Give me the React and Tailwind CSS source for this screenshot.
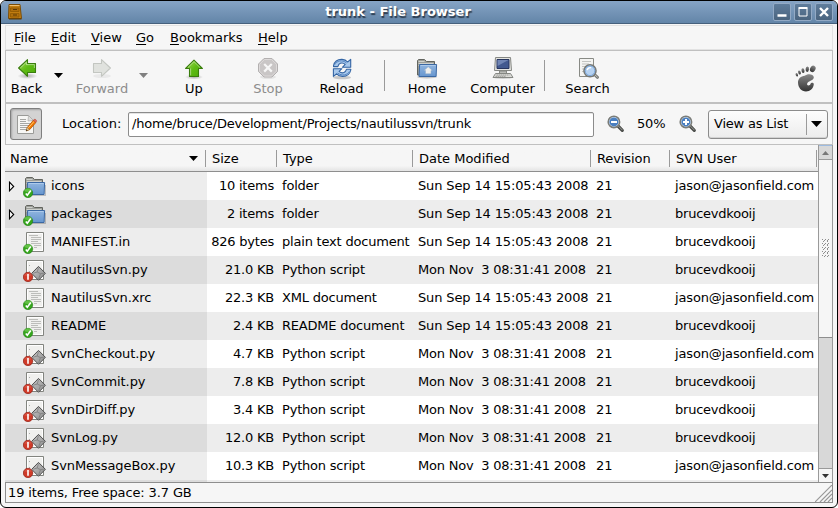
import React from "react";

const BackArrow = () => (
  <svg width="24" height="24" viewBox="0 0 24 24">
    <defs>
      <linearGradient id="green" x1="0" y1="0" x2="1" y2="1">
        <stop offset="0" stopColor="#a6e05a" />
        <stop offset="0.5" stopColor="#5fbb14" />
        <stop offset="1" stopColor="#4caa08" />
      </linearGradient>
      <radialGradient id="arrowShadow">
        <stop offset="0" stopColor="#000" stopOpacity="0.3" />
        <stop offset="1" stopColor="#000" stopOpacity="0" />
      </radialGradient>
    </defs>
    <ellipse cx="12.5" cy="20" rx="10" ry="3" fill="url(#arrowShadow)" />
    <path d="M3.6 12 L12.5 3.7 V7.5 H20.5 V16.5 H12.5 V20.3 Z" fill="url(#green)" stroke="#3a7d0e" strokeWidth="1.1" strokeLinejoin="round" />
    <path d="M5.3 12 L11.4 6.2 V8.6 H19.4 V12" fill="none" stroke="#fff" strokeOpacity="0.45" />
  </svg>
);

const ForwardArrow = () => (
  <svg width="24" height="24" viewBox="0 0 24 24">
    <ellipse cx="12" cy="20" rx="9" ry="2" fill="#000" opacity="0.05" />
    <path d="M20.4 12 L11.5 3.7 V7.5 H3.5 V16.5 H11.5 V20.3 Z" fill="#e0e2de" stroke="#c3c6c1" strokeWidth="1.1" strokeLinejoin="round" />
  </svg>
);

const UpArrow = () => (
  <svg width="24" height="24" viewBox="0 0 24 24">
    <ellipse cx="12" cy="21" rx="9" ry="2.6" fill="url(#arrowShadow)" />
    <path d="M12 4.2 L20.4 12.5 H16.5 V20.5 H7.5 V12.5 H3.6 Z" fill="url(#green)" stroke="#3a7d0e" strokeWidth="1.1" strokeLinejoin="round" />
    <path d="M5.9 11.5 L12 5.6 L18 11.5 M8.6 12.5 V19.4" fill="none" stroke="#fff" strokeOpacity="0.45" />
  </svg>
);

const StopIcon = () => (
  <svg width="24" height="24" viewBox="0 0 24 24">
    <ellipse cx="12" cy="21" rx="8" ry="2" fill="#000" opacity="0.07" />
    <path d="M8 2.5 H16 L21.5 8 V15.5 L16 21 H8 L2.5 15.5 V8 Z" fill="#c9c6c6" stroke="#b3b0b0" />
    <path d="M8.4 3.5 H15.6 L20.5 8.4 V15.1 L15.6 20 H8.4 L3.5 15.1 V8.4 Z" fill="none" stroke="#dddada" />
    <path d="M8.2 8 L15.8 15.6 M15.8 8 L8.2 15.6" stroke="#f6f6f6" strokeWidth="2.2" />
  </svg>
);

const ReloadIcon = () => (
  <svg width="24" height="24" viewBox="0 0 24 24">
    <ellipse cx="12" cy="21.5" rx="9" ry="1.7" fill="#000" opacity="0.18" />
    <path d="M3.5 9.8 C4.6 5 8.5 3.3 12 3.4 C14.8 3.5 16.6 4.8 17.6 6 L20.7 3.4 V11.3 H12.4 L15.2 8.4 C13.6 6.9 11.8 6.7 10.3 7.3 C8.6 8 8.3 9 7.8 10.6 H3.5 Z" fill="#a9c9ec" stroke="#3465a4" strokeWidth="1.1" strokeLinejoin="round" />
    <path d="M20.8 14 C19.7 18.8 15.8 20.5 12.3 20.4 C9.5 20.3 7.7 19 6.7 17.8 L3.4 20.4 V12.7 H11.9 L9.1 15.4 C10.7 16.9 12.5 17.1 14 16.5 C15.7 15.8 16 14.8 16.5 13.3 H20.8 Z" fill="#a9c9ec" stroke="#3465a4" strokeWidth="1.1" strokeLinejoin="round" />
    <path d="M5 8.5 C6.5 5 12 3.2 16.6 7" stroke="#5686c4" strokeWidth="1" fill="none" />
    <path d="M19.2 15.6 C17.5 19 12 20.4 7.6 17" stroke="#5686c4" strokeWidth="1" fill="none" />
  </svg>
);

const FolderShape = () => (
  <>
    <path d="M2.5 19 V4.5 L3.5 3.5 H9.5 L11.5 5.5 H19.5 V19 Z" fill="#9c9e99" stroke="#63655f" />
    <path d="M3.5 5.5 H9.5 M3.5 7.5 H18.5 M3.5 9.5 H5" stroke="#cfd1cc" />
    <path d="M4.6 8.5 H21.6 L21.1 20.5 H4 Z" fill="url(#folder)" stroke="#3b68a3" strokeLinejoin="round" />
    <path d="M5.6 9.5 H20.6" stroke="#b5cfee" strokeOpacity="0.8" />
  </>
);

const Gradients = () => (
  <svg className="absolute" width="0" height="0">
    <defs>
      <linearGradient id="folder" x1="0" y1="0" x2="0" y2="1">
        <stop offset="0" stopColor="#90b5df" />
        <stop offset="1" stopColor="#6796cf" />
      </linearGradient>
      <linearGradient id="foot" x1="0" y1="0" x2="0" y2="1">
        <stop offset="0" stopColor="#888" />
        <stop offset="1" stopColor="#333" />
      </linearGradient>
      <linearGradient id="gem" x1="0" y1="0" x2="1" y2="1">
        <stop offset="0" stopColor="#c8c8c8" />
        <stop offset="1" stopColor="#8a8a8a" />
      </linearGradient>
    </defs>
  </svg>
);

const HomeIcon = () => (
  <svg width="24" height="24" viewBox="0 0 24 24">
    <ellipse cx="12" cy="21" rx="10" ry="1.5" fill="#000" opacity="0.2" />
    <FolderShape />
    <path d="M13.2 10.8 L17.5 14.5 H16 V17.8 H10.5 V14.5 H9 Z" fill="#eeeeec" stroke="#8fa9c6" strokeWidth="0.5" />
  </svg>
);

const ComputerIcon = () => (
  <svg width="24" height="24" viewBox="0 0 24 24">
    <ellipse cx="12" cy="21.5" rx="10" ry="1.5" fill="#000" opacity="0.15" />
    <path d="M4.5 1.5 H19.5 L20.5 14.5 H3.5 Z" fill="#e4e4e0" stroke="#858783" />
    <path d="M6 3.5 H18 V12.5 H6 Z" fill="#42598f" stroke="#27355e" />
    <path d="M6.5 4 H17.5 L6.5 10 Z" fill="#7c90bd" opacity="0.8" />
    <path d="M8.5 15 H15.5 V17.5 H8.5 Z" fill="#b9bab6" stroke="#858783" />
    <path d="M4.5 17.5 H19.5 L22 21.5 H2 Z" fill="#dcdcd8" stroke="#858783" strokeLinejoin="round" />
    <path d="M5.5 19 H18.5 M4.5 20.3 H15" stroke="#9b9c98" strokeDasharray="1.5 0.5" />
  </svg>
);

const SearchIcon = () => (
  <svg width="24" height="24" viewBox="0 0 24 24">
    <path d="M3.5 2.5 H17.5 V20.5 H3.5 Z" fill="#f4f4f2" stroke="#888a85" />
    <path d="M6 5.5 H15 M6 8 H13 M6 10.5 H9 M6 13 H8 M6 15.5 H8" stroke="#c3c4c1" />
    <path d="M18.5 18.5 L21.5 21.3" stroke="#777975" strokeWidth="3" strokeLinecap="round" />
    <path d="M18.7 18.6 L21.3 21" stroke="#c8c9c5" strokeWidth="1" strokeLinecap="round" />
    <circle cx="14" cy="14.8" r="6" fill="#b6d2f1" stroke="#777975" strokeWidth="1.6" />
    <circle cx="14" cy="14.8" r="4.8" fill="none" stroke="#7ba6d8" strokeWidth="1" />
    <path d="M11.2 14.2 A3 3 0 0 1 15 11.8" stroke="#fff" strokeWidth="1.4" fill="none" />
  </svg>
);

const Foot = () => (
  <svg width="22" height="28" viewBox="0 0 22 28">
    <g fill="url(#foot)">
      <path d="M9.6 10.8 C12.5 8.2 18.6 8.8 18.8 12.3 C19 15.5 13.2 15.8 12.2 18.5 C11.4 21 15 21 15.6 18.8 C16 17.3 19 17.4 18.8 19.3 C18.4 23.5 15 26.5 11 26.5 C6.3 26.5 3.2 22.6 3 17.8 C2.9 13.6 6 11.3 9.6 10.8 Z" />
      <ellipse cx="17.8" cy="3.9" rx="2.6" ry="3.4" transform="rotate(30 17.8 3.9)" />
      <ellipse cx="12.3" cy="4.2" rx="1.7" ry="2.7" transform="rotate(5 12.3 4.2)" />
      <ellipse cx="8" cy="5.7" rx="1.5" ry="2.4" transform="rotate(-10 8 5.7)" />
      <ellipse cx="4.5" cy="7.5" rx="1.3" ry="2.1" transform="rotate(-20 4.5 7.5)" />
      <ellipse cx="1.8" cy="9.8" rx="1.1" ry="1.8" transform="rotate(-25 1.8 9.8)" />
    </g>
  </svg>
);

const EditIcon = () => (
  <svg width="24" height="24" viewBox="0 0 24 24">
    <path d="M3.5 3.5 H14.5 L19.5 8.5 V21.5 H3.5 Z" fill="#f6f6f4" stroke="#9a9b98" />
    <path d="M14.5 3.5 L14 9 L19.5 8.5 Z" fill="#dcdcda" stroke="#aaaba8" strokeWidth="0.7" />
    <path d="M6 7.5 H12 M6 9.5 H12 M6 11.5 H16 M6 13.5 H15 M6 15.5 H13 M6 17.5 H13" stroke="#a6a7a4" />
    <path d="M12.3 18.8 L13.3 15.4 L19.3 8.3 L21.9 10.5 L15.8 17.5 Z" fill="#f57900" stroke="#b35304" strokeWidth="0.8" />
    <path d="M14.4 15.8 L20.2 9.3" stroke="#fcc56d" strokeWidth="1" />
    <path d="M12.3 18.8 L13.2 15.6 L15.6 17.5 Z" fill="#e9d2a5" stroke="#8f6b2f" strokeWidth="0.5" />
    <path d="M19.3 8.3 L20.3 7.3 C21.5 7 23 8.2 22.6 9.6 L21.8 10.4 Z" fill="#e06a5a" stroke="#a83c2c" strokeWidth="0.5" />
    <path d="M12 19.2 L12.6 17.6 L13.6 18.3 Z" fill="#222" />
  </svg>
);

const Magnifier = ({ plus }) => (
  <svg width="18" height="18" viewBox="0 0 18 18">
    <path d="M11 11 L15.3 15.3" stroke="#4a4c49" strokeWidth="3.2" strokeLinecap="round" />
    <path d="M11.5 11.2 L15.2 14.9" stroke="#9b9d99" strokeWidth="1" strokeLinecap="round" />
    <circle cx="6.9" cy="6.9" r="5.7" fill="#dfe9f5" stroke="#7a7c78" strokeWidth="1.6" />
    <circle cx="6.9" cy="6.9" r="4.5" fill="#4a7fc0" />
    <path d={plus ? "M4 7 H10 M7 4 V10" : "M4 7 H10"} stroke="#fff" strokeWidth="2" />
  </svg>
);

const GoodBadge = () => (
  <g>
    <circle cx="5" cy="19" r="4.7" fill="#35a51c" stroke="#1e7d10" strokeWidth="0.6" />
    <path d="M1.2 17 A4 4 0 0 1 8.8 17 C7 18.3 3.5 18.3 1.2 17 Z" fill="#7fd35f" opacity="0.6" />
    <path d="M2.8 19.4 L4.3 21.3 L7.8 16.6" stroke="#fff" strokeWidth="1.6" fill="none" />
  </g>
);

const BadBadge = () => (
  <g>
    <circle cx="5" cy="19" r="4.7" fill="#cf3a28" stroke="#8f1b10" strokeWidth="0.7" />
    <path d="M1.2 17.5 A4 4 0 0 1 8.8 17.5 C7 18.5 3.5 18.5 1.2 17.5 Z" fill="#e2695a" opacity="0.4" />
    <path d="M5 16 V21.8" stroke="#fff" strokeWidth="1.6" />
  </g>
);

const RowIcon = ({ kind }) => (
  <svg width="24" height="24" viewBox="0 0 24 24" className="shrink-0">
    {kind === "folder" ? (
      <g>
        <path d="M4 21.5 H22.5 V11" fill="none" stroke="#000" strokeOpacity="0.2" />
        <FolderShape />
      </g>
    ) : (
      <g>
        <path d="M3.5 2.5 H20.5 V21.5 H3.5 Z" fill="#f0f0ee" stroke="#82847f" />
        <path d="M4.5 3.5 H19.5 V20.5 H4.5 Z" fill="none" stroke="#fff" />
        {kind === "text" ? (
          <path d="M6 5.5 H15 M8 7.5 H18 M8 9.5 H18 M8 11.5 H15 M8 13.5 H18 M11 15.5 H18 M11 17.5 H14" stroke="#bcbdba" />
        ) : (
          <g>
            <path d="M6 7.5 H7 M6 13.5 H7" stroke="#aaa" />
            <path d="M15.5 8.4 L22.4 15.3 L15.5 22.3 L8.7 15.3 Z" fill="url(#gem)" stroke="#4f4f4f" />
            <path d="M15.5 9.6 L14.2 14 L10.2 15.2 M14.2 14 L17.5 15.7 L15.6 21 M17.5 15.7 L21 15.2" stroke="#7c7c7c" strokeWidth="0.8" fill="none" />
          </g>
        )}
      </g>
    )}
    {kind === "script" ? <BadBadge /> : <GoodBadge />}
  </svg>
);

const Tri = ({ className = "", w = 9, h = 5, up }) => (
  <svg className={className} width={w} height={h} viewBox="0 0 10 5" preserveAspectRatio="none">
    <path d={up ? "M0 5 L5 0 L10 5 Z" : "M0 0 H10 L5 5 Z"} fill="currentColor" />
  </svg>
);

const Tool = ({ label, children, width, muted }) => (
  <div className={`flex shrink-0 flex-col items-center ${width} ${muted ? "text-[#8d8d8d]" : "text-black"}`}>
    <div className="h-[24px]">{children}</div>
    <div className="mt-[1px] h-[16px] leading-[16px]">{label}</div>
  </div>
);

const WinButton = ({ children }) => (
  <div className="flex h-[18px] w-[18px] items-center justify-center rounded-[2px] border border-[#93aac5] bg-gradient-to-b from-[#5f7d9c] to-[#4a647f]">
    <svg width="14" height="14" viewBox="0 0 14 14">{children}</svg>
  </div>
);

const rows = [
  ["folder", "icons", "10 items", "folder", 0, 0],
  ["folder", "packages", "2 items", "folder", 0, 1],
  ["text", "MANIFEST.in", "826 bytes", "plain text document", 0, 1],
  ["script", "NautilusSvn.py", "21.0 KB", "Python script", 1, 1],
  ["text", "NautilusSvn.xrc", "22.3 KB", "XML document", 0, 0],
  ["text", "README", "2.4 KB", "README document", 0, 1],
  ["script", "SvnCheckout.py", "4.7 KB", "Python script", 1, 0],
  ["script", "SvnCommit.py", "7.8 KB", "Python script", 1, 1],
  ["script", "SvnDirDiff.py", "3.4 KB", "Python script", 1, 1],
  ["script", "SvnLog.py", "12.0 KB", "Python script", 1, 1],
  ["script", "SvnMessageBox.py", "10.3 KB", "Python script", 1, 0],
];
const dates = [
  ["Sun Sep 14 15:05:43 2008", "tracking-[-0.14px]"],
  ["Mon Nov  3 08:31:41 2008", "tracking-[-0.22px]"],
];
const users = [
  ["jason@jasonfield.com", "tracking-[-0.15px]"],
  ["brucevdkooij", "tracking-[-0.23px]"],
];
const menus = [
  ["File", "w-[37px]"],
  ["Edit", "w-[40px]"],
  ["View", "w-[45px]"],
  ["Go", "w-[34px]"],
  ["Bookmarks", "w-[88px]"],
  ["Help", "w-[40px]"],
];
const headers = [
  ["Name", "w-[201px] pl-[5px]"],
  ["Size", "w-[71px] pl-[6px]"],
  ["Type", "w-[136px] pl-[6px]"],
  ["Date Modified", "w-[178px] pl-[6px]"],
  ["Revision", "w-[79px] pl-[6px] tracking-[-0.1px]"],
  ["SVN User", "w-[147px] pl-[6px]"],
];

export default function App() {
  return (
    <div className="h-[508px] w-[838px] overflow-hidden bg-white font-['DejaVu_Sans',sans-serif] text-[13px] text-black">
      <Gradients />
      <div className="flex h-full w-full flex-col overflow-hidden rounded-[6px] border border-black bg-[#f6f6f6]">
        <div className="flex h-[23px] shrink-0 items-center border-b border-[#46607c] bg-gradient-to-b from-[#86a4c5] to-[#6385a8] pr-[4px] pl-[6px]">
          <svg width="16" height="18" viewBox="0 0 16 18">
            <path d="M2 1.5 H13 L14.5 15.5 H1.5 Z" fill="#c17d11" stroke="#7a4d08" />
            <path d="M2 16 H14.5" stroke="#5b3a07" />
            <path d="M2.5 2.5 H12.5" stroke="#efc173" />
            <path d="M3.5 5 H12 V8.5 H3.5 Z M3.5 10.5 H12 V14 H3.5 Z" fill="#b06f0c" stroke="#8f5902" strokeWidth="0.8" />
            <path d="M6 6.5 H10 M6 12 H10" stroke="#5b3a07" />
          </svg>
          <div className="flex-1 text-center font-bold text-white [text-shadow:1px_2px_1px_#2a3a4c]">trunk - File Browser</div>
          <div className="flex gap-[3px]">
            <WinButton><path d="M2.5 10.5 H11.5" stroke="#fff" strokeWidth="2.4" /></WinButton>
            <WinButton><path d="M3 3.5 H11 V11 H3 Z" fill="none" stroke="#fff" /><path d="M2.5 3 H11.5" stroke="#fff" strokeWidth="2" /></WinButton>
            <WinButton><path d="M3 3 L11 11 M11 3 L3 11" stroke="#fff" strokeWidth="2.4" /></WinButton>
          </div>
        </div>

        <div className="flex min-h-0 flex-1 flex-col px-[4px] pt-[1px] pb-[4px]">
          <div className="flex h-[25px] shrink-0 items-center border border-[#e2e2e2] pl-[8px]">
            {menus.map(([m, w]) => (
              <div key={m} className={`${w} leading-[16px] whitespace-nowrap`}>
                <span className="underline decoration-1 underline-offset-2">{m[0]}</span>{m.slice(1)}
              </div>
            ))}
          </div>

          <div className="flex h-[53px] shrink-0 border border-[#c0c0c0] pt-[5px]">
            <Tool label="Back" width="w-[41px]"><BackArrow /></Tool>
            <div className="w-[23px] pt-[17px] pl-[7px]"><Tri /></div>
            <Tool label="Forward" width="w-[64px]" muted><ForwardArrow /></Tool>
            <div className="w-[18px] pt-[17px] pl-[5px] text-[#808080]"><Tri /></div>
            <Tool label="Up" width="w-[84px]"><UpArrow /></Tool>
            <Tool label="Stop" width="w-[64px]" muted><StopIcon /></Tool>
            <Tool label="Reload" width="w-[83px]"><ReloadIcon /></Tool>
            <div className="flex w-[3px] justify-center pt-[4px]"><div className="h-[31px] w-px bg-[#9a9a9a]" /></div>
            <Tool label="Home" width="w-[82px]"><HomeIcon /></Tool>
            <Tool label="Computer" width="w-[69px]"><ComputerIcon /></Tool>
            <div className="flex w-[15px] justify-center pt-[4px]"><div className="h-[31px] w-px bg-[#9a9a9a]" /></div>
            <Tool label="Search" width="w-[71px]"><SearchIcon /></Tool>
            <div className="ml-auto pt-[9px] pr-[15px]"><Foot /></div>
          </div>

          <div className="flex h-[42px] shrink-0 items-center border border-[#c0c0c0]">
            <div className="ml-[4px] flex h-[32px] w-[32px] items-center justify-center rounded-[3px] border border-[#7f7f7f] bg-[#d3d3d3] shadow-[inset_1px_1px_2px_#a5a5a5]"><EditIcon /></div>
            <div className="w-[86px] pl-[20px]">Location:</div>
            <div className="flex h-[25px] w-[466px] items-center rounded-[2px] border border-[#8c8c8c] bg-white pl-[3px] tracking-[-0.175px] shadow-[inset_0_1px_0_#e4e4e4]">/home/bruce/Development/Projects/nautilussvn/trunk</div>
            <div className="w-[43px] pl-[13px]"><Magnifier /></div>
            <div className="w-[42px] tracking-[-0.15px]">50%</div>
            <div className="w-[29px]"><Magnifier plus /></div>
            <div className="flex h-[29px] w-[120px] items-center rounded-[3px] border border-[#8c8c8c] bg-gradient-to-b from-[#fdfdfd] to-[#ececec] pl-[5px] shadow-[inset_0_-1px_0_#d2d2d2]">
              <span className="w-[92px] tracking-[-0.2px]">View as List</span>
              <span className="h-[21px] w-px bg-[#9a9a9a]" />
              <Tri className="ml-[4px]" w={11} h={6} />
            </div>
          </div>

          <div className="flex min-h-0 flex-1">
            <div className="flex w-[813px] flex-col overflow-hidden">
              <div className="flex h-[27px] shrink-0 items-center border-b border-[#8e8e8e] bg-gradient-to-b from-[#f6f6f6] from-80% to-[#e4e4e4]">
                {headers.map(([h, w]) => (
                  <div key={h} className={`flex h-[17px] shrink-0 items-center justify-between border-r border-[#9a9a9a] leading-[17px] ${w}`}>
                    {h}
                    {h === "Name" && <Tri className="mr-[7px]" />}
                  </div>
                ))}
              </div>
              {rows.map(([kind, name, size, type, d, u], i) => (
                <div key={name} className={`flex h-[28px] shrink-0 items-center whitespace-pre ${i % 2 ? "bg-[#ededed]" : "bg-white"}`}>
                  <div className={`flex h-full w-[202px] items-center pl-[3px] ${i % 2 ? "bg-[#dcdcdc]" : "bg-[#ededed]"}`}>
                    <div className="w-[15px]">
                      {kind === "folder" && (
                        <svg width="8" height="11" viewBox="0 0 8 11"><path d="M1.5 1.2 L5.7 5.5 L1.5 9.8 Z" fill="#fff" stroke="#000" strokeWidth="1.1" /></svg>
                      )}
                    </div>
                    <RowIcon kind={kind} />
                    <span className="pl-[4px] tracking-[-0.07px]">{name}</span>
                  </div>
                  <div className="w-[67px] text-right tracking-[-0.22px]">{size}</div>
                  <div className="w-[144px] pl-[8px] tracking-[-0.2px]">{type}</div>
                  <div className={`w-[178px] ${dates[d][1]}`}>{dates[d][0]}</div>
                  <div className="w-[79px]">21</div>
                  <div className={users[u][1]}>{users[u][0]}</div>
                </div>
              ))}
              <div className="flex h-[28px] shrink-0 bg-[#ededed]"><div className="w-[202px] bg-[#dcdcdc]" /></div>
            </div>
            <div className="flex w-[15px] flex-col border-x border-[#9a9a9a] bg-[#d8d8d8]">
              <div className="flex h-[15px] shrink-0 items-center justify-center border-t border-b border-t-[#9dbbe0] border-b-[#9a9a9a] text-[#777]"><Tri up w={7} h={4} /></div>
              <div className="flex h-[178px] items-center justify-center border-b border-[#8e8e8e] bg-[#f6f6f6]">
                <svg width="7" height="19" viewBox="0 0 7 19">
                  {[...Array(9)].map((_, i) => (
                    <path key={i} d={i % 2 ? `M1 ${i * 2 + 0.5} h1 m3 0 h1` : `M0 ${i * 2 + 0.5} h1 m2 0 h1 m2 0 h1 M0 ${i * 2 + 1.5} m2 0 h1 m2 0 h1`} stroke="#8e8e8e" />
                  ))}
                </svg>
              </div>
              <div className="h-[130px]" />
              <div className="flex flex-1 items-center justify-center border-t border-[#9a9a9a] bg-[#f6f6f6]"><Tri w={7} h={4} className="text-[#333]" /></div>
            </div>
          </div>

          <div className="flex h-[21px] shrink-0 items-center justify-between border border-[#8e8e8e] pl-[2px]">
            <span className="tracking-[-0.13px]">19 items, Free space: 3.7 GB</span>
            <svg width="17" height="17" viewBox="0 0 17 17" className="self-end">
              <path d="M0 17 L17 0 M5 17 L17 5 M9 17 L17 9 M13 17 L17 13" stroke="#9a9a9a" strokeWidth="1.2" />
            </svg>
          </div>
        </div>
      </div>
    </div>
  );
}
